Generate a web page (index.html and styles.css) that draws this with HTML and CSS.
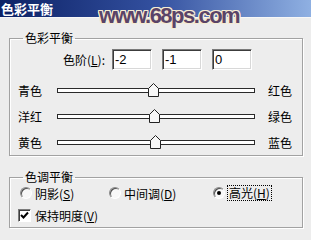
FILE: index.html
```html
<!DOCTYPE html>
<html lang="zh">
<head>
  <meta charset="UTF-8">
  <title>色彩平衡</title>
  <link rel="stylesheet" href="styles.css">
</head>
<body>
  <div class="dialog">
    <div class="titlebar">色彩平衡</div>
    <!-- site watermark over the title bar -->
    <div class="watermark">www.68ps.com</div>

    <fieldset class="group balance">
      <legend>色彩平衡</legend>
      <div class="levels">
        <label class="levels-label">色阶(<u>L</u>):</label>
        <input class="num" type="text" value="-2">
        <input class="num" type="text" value="-1">
        <input class="num" type="text" value="0">
      </div>
      <div class="sliders">
        <div class="slider-row">
          <span class="lbl-left">青色</span>
          <div class="track">
            <svg class="thumb" style="left: 90px" width="11" height="14" viewBox="0 0 11 14"><polygon points="0.5,5.5 5.5,0.5 10.5,5.5 10.5,13.5 0.5,13.5" fill="#f7f7f7" stroke="#222"/></svg>
          </div>
          <span class="lbl-right">红色</span>
        </div>
        <div class="slider-row">
          <span class="lbl-left">洋红</span>
          <div class="track">
            <svg class="thumb" style="left: 91px" width="11" height="14" viewBox="0 0 11 14"><polygon points="0.5,5.5 5.5,0.5 10.5,5.5 10.5,13.5 0.5,13.5" fill="#f7f7f7" stroke="#222"/></svg>
          </div>
          <span class="lbl-right">绿色</span>
        </div>
        <div class="slider-row">
          <span class="lbl-left">黄色</span>
          <div class="track">
            <svg class="thumb" style="left: 92px" width="11" height="14" viewBox="0 0 11 14"><polygon points="0.5,5.5 5.5,0.5 10.5,5.5 10.5,13.5 0.5,13.5" fill="#f7f7f7" stroke="#222"/></svg>
          </div>
          <span class="lbl-right">蓝色</span>
        </div>
      </div>
    </fieldset>

    <fieldset class="group tone">
      <legend>色调平衡</legend>
      <div class="radios">
        <div class="radio-item shadows"><span class="radio"></span><span>阴影(<u>S</u>)</span></div>
        <div class="radio-item midtones"><span class="radio"></span><span>中间调(<u>D</u>)</span></div>
        <div class="radio-item"><span class="radio checked"></span><span class="focus">高光(<u>H</u>)</span></div>
      </div>
      <div class="check-row">
        <span class="checkbox">
          <svg width="9" height="9" viewBox="0 0 9 9"><polyline points="1,4 3.5,6.5 8,1.5" fill="none" stroke="#000" stroke-width="2"/></svg>
        </span>
        <span>保持明度(<u>V</u>)</span>
      </div>
    </fieldset>
  </div>
</body>
</html>
```

FILE: styles.css
```css
body {
  margin: 0;
  font-family: "Noto Sans CJK SC", "Liberation Sans", sans-serif;
  font-size: 12px;
  color: #000;
}
.dialog {
  position: relative;
  width: 311px;
  height: 240px;
  background-color: #ededed;
  overflow: hidden;
}
.titlebar {
  height: 17px;
  line-height: 17px;
  padding-left: 1px;
  font-size: 13px;
  font-weight: bold;
  color: #fff;
  background: linear-gradient(to right, #0c2165, #33509f 50%, #8fb0e2);
  border-bottom: 1px solid #f7f7f7;
}
.watermark {
  position: absolute;
  left: 99px;
  top: 3px;
  font-family: "Liberation Sans", Arial, sans-serif;
  font-size: 22px;
  line-height: 26px;
  font-weight: bold;
  letter-spacing: -1.5px;
  color: #5a4468;
  text-shadow: 1px 0 0 #f6ecd2, -1px 0 0 #f6ecd2, 0 1px 0 #f6ecd2, 0 -1px 0 #f6ecd2,
    1px 1px 0 #f6ecd2, -1px -1px 0 #f6ecd2, 1px -1px 0 #f6ecd2, -1px 1px 0 #f6ecd2;
}
.group {
  margin: 0 8px 0 9px;
  padding: 0;
  border: 1px solid #a2a2a2;
  box-shadow: inset 1px 1px 0 #fff, 1px 1px 0 #fff;
}
.group legend {
  margin-left: 13px;
  padding: 0 2px;
  line-height: 14px;
}
.balance {
  margin-top: 13px;
}
.tone {
  margin-top: 14px;
  padding-bottom: 3px;
}
.levels {
  display: flex;
  align-items: center;
  margin-top: 4px;
  gap: 10px;
}
.levels-label {
  width: 95px;
  margin-right: -3px;
  text-align: right;
}
.num {
  box-sizing: border-box;
  width: 40px;
  height: 21px;
  margin: 0;
  padding: 0 2px;
  font-family: "Liberation Sans", Arial, sans-serif;
  font-size: 13px;
  background: #fff;
  border: 1px solid;
  border-color: #7a7a7a #fff #fff #7a7a7a;
  box-shadow: inset 1px 1px 0 #3c3c3c, inset -1px -1px 0 #d8d8d8;
  outline: none;
}
.sliders {
  margin-top: 7px;
}
.slider-row {
  display: flex;
  align-items: center;
  height: 26px;
  padding: 0 8px;
}
.lbl-left {
  width: 39px;
}
.track {
  position: relative;
  box-sizing: border-box;
  width: 198px;
  height: 5px;
  background: #fff;
  border: 1px solid #2a2a2a;
}
.thumb {
  position: absolute;
  top: -6px;
}
.lbl-right {
  margin-left: 13px;
}
.radios {
  display: flex;
  align-items: center;
  height: 18px;
  padding-left: 10px;
}
.radio-item {
  display: flex;
  align-items: center;
  gap: 3px;
}
.shadows {
  width: 89px;
}
.midtones {
  width: 104px;
}
.radio {
  position: relative;
  box-sizing: border-box;
  width: 12px;
  height: 12px;
  border-radius: 50%;
  background: #f8f8f8;
  border: 1px solid;
  border-color: #8a8a8a #fff #fff #8a8a8a;
  box-shadow: inset 1px 1px 0 #505050;
}
.radio.checked::after {
  content: "";
  position: absolute;
  left: 3px;
  top: 3px;
  width: 4px;
  height: 4px;
  border-radius: 50%;
  background: #000;
}
.focus {
  outline: 1px dotted #000;
  padding: 0 1px;
  line-height: 14px;
}
.check-row {
  display: flex;
  align-items: center;
  gap: 4px;
  height: 18px;
  margin-top: 4px;
  padding-left: 8px;
}
.checkbox {
  display: flex;
  align-items: center;
  justify-content: center;
  box-sizing: border-box;
  width: 13px;
  height: 13px;
  background: #fff;
  border: 1px solid;
  border-color: #7a7a7a #fff #fff #7a7a7a;
  box-shadow: inset 1px 1px 0 #3c3c3c;
}
```
